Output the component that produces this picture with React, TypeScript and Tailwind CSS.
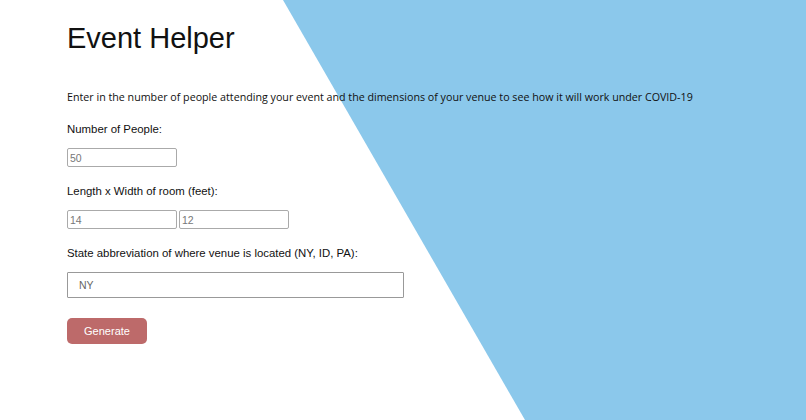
import React from "react";

export default function App() {
  return (
    <div className="relative w-[806px] h-[420px] overflow-hidden bg-white font-['Liberation_Sans',Arial,sans-serif] text-black">
      <div className="absolute inset-0 bg-[#8bc8eb] [clip-path:polygon(283px_0,806px_0,806px_420px,525px_420px)]" />
      <div className="relative pl-[67px] pt-[18px]">
        <h1 className="text-[29px] leading-[40px] font-light text-[#111]">Event Helper</h1>
        <p className="mt-[30px] text-[10.7px] leading-[18px] font-['Open_Sans',sans-serif] text-[#111]">
          Enter in the number of people attending your event and the dimensions of your venue to see how it will work under COVID-19
        </p>
        <div className="mt-[15px] text-[11.4px] leading-[16px] text-[#111]">Number of People:</div>
        <div className="mt-[11px] flex">
          <input
            readOnly
            value="50"
            className="w-[110px] h-[19px] border border-[#aaa] rounded-[2px] px-[2px] text-[10.5px] text-[#777] outline-none bg-white"
          />
        </div>
        <div className="mt-[16px] text-[11.4px] leading-[16px] text-[#111]">Length x Width of room (feet):</div>
        <div className="mt-[11px] flex gap-[2px]">
          <input
            readOnly
            value="14"
            className="w-[110px] h-[19px] border border-[#aaa] rounded-[2px] px-[2px] text-[10.5px] text-[#777] outline-none bg-white"
          />
          <input
            readOnly
            value="12"
            className="w-[110px] h-[19px] border border-[#aaa] rounded-[2px] px-[2px] text-[10.5px] text-[#777] outline-none bg-white"
          />
        </div>
        <div className="mt-[16px] text-[11.4px] leading-[16px] text-[#111]">State abbreviation of where venue is located (NY, ID, PA):</div>
        <div className="mt-[11px] flex">
          <input
            readOnly
            value="NY"
            className="w-[337px] h-[26px] border border-[#999] rounded-[1px] px-[11px] text-[10.5px] text-[#666] outline-none bg-white"
          />
        </div>
        <button className="mt-[20px] w-[80px] h-[26px] rounded-[5px] bg-[#bd6a6a] text-white text-[11px] leading-none">
          Generate
        </button>
      </div>
    </div>
  );
}
